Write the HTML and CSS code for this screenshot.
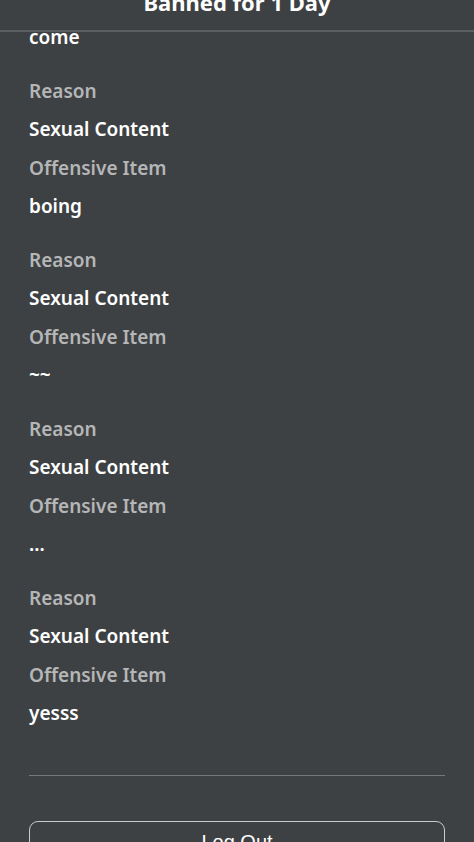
FILE: index.html
```html
<!DOCTYPE html>
<html>
<head>
<meta charset="utf-8">
<link rel="stylesheet" href="styles.css">
</head>
<body>
<header class="topbar">
  <h1 class="title">Banned for 1 Day</h1>
</header>
<main class="content">
  <div class="list">
    <div class="group">
      <div class="value">come</div>
    </div>
    <div class="group">
      <div class="label">Reason</div>
      <div class="value">Sexual Content</div>
      <div class="label">Offensive Item</div>
      <div class="value">boing</div>
    </div>
    <div class="group">
      <div class="label">Reason</div>
      <div class="value">Sexual Content</div>
      <div class="label">Offensive Item</div>
      <div class="value">~~</div>
    </div>
    <div class="group">
      <div class="label">Reason</div>
      <div class="value">Sexual Content</div>
      <div class="label">Offensive Item</div>
      <div class="value">...</div>
    </div>
    <div class="group">
      <div class="label">Reason</div>
      <div class="value">Sexual Content</div>
      <div class="label">Offensive Item</div>
      <div class="value">yesss</div>
    </div>
  </div>
  <hr class="divider">
  <button class="logout">Log Out</button>
</main>
</body>
</html>
```
FILE: styles.css
```css
* { box-sizing: border-box; }
html, body {
  margin: 0;
  padding: 0;
  background: #3e4143;
  height: 100%;
  overflow: hidden;
}
body {
  font-family: "Noto Sans", "Open Sans", sans-serif;
  color: #ffffff;
}
.topbar {
  position: relative;
  z-index: 2;
  height: 32px;
  background: #3e4143;
  border-bottom: 2px solid #5c5f61;
  display: flex;
  justify-content: center;
  overflow: hidden;
}
.title {
  margin: -10px 0 0 0;
  font-size: 22px;
  line-height: 24px;
  font-weight: 700;
  color: #ffffff;
}
.content {
  padding: 0 29px;
}
.list {
  margin-top: -14px;
}
.group {
  margin-bottom: 15px;
}
.label, .value {
  font-size: 19px;
  line-height: 38.5px;
  font-weight: 600;
  white-space: nowrap;
}
.label {
  color: #b5b6b7;
}
.value {
  color: #ffffff;
}
.divider {
  margin: 42px 0 0 0;
  border: none;
  height: 1px;
  background: #75787a;
}
.logout {
  display: block;
  width: 100%;
  margin-top: 45px;
  height: 44px;
  background: transparent;
  border: 1.5px solid #c9cacb;
  border-radius: 9px;
  color: #ffffff;
  font-family: "Liberation Sans", Arial, sans-serif;
  font-size: 20px;
}
```
